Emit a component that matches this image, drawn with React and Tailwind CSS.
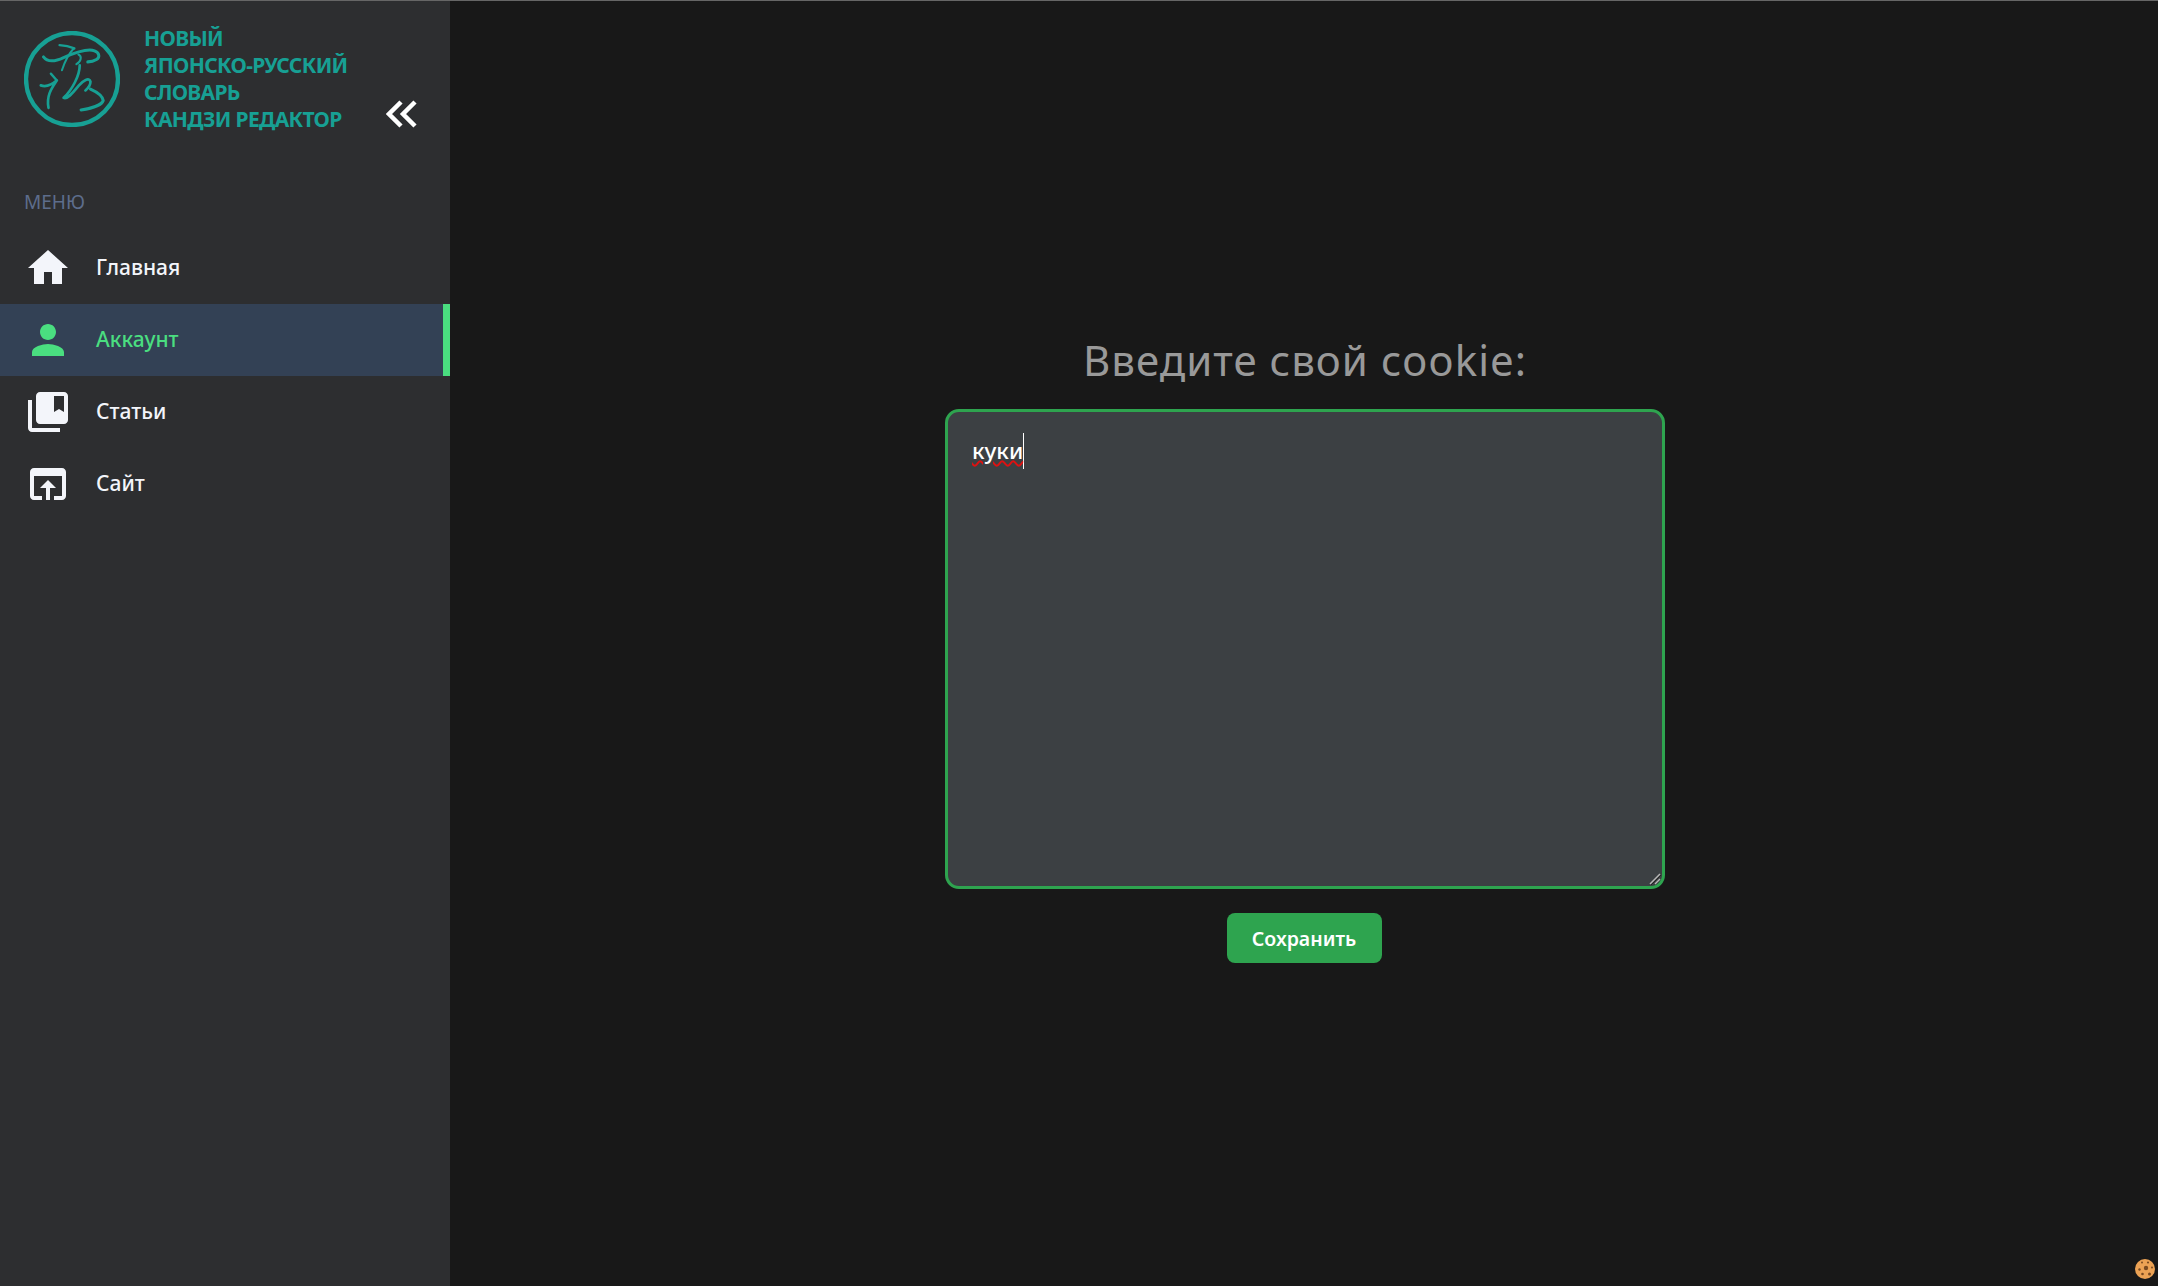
const FONT = "font-['Noto_Sans',sans-serif]";

const navItems = [
  {
    label: "Главная",
    d: "M10 20v-6h4v6h5v-8h3L12 3 2 12h3v8z",
  },
  {
    label: "Аккаунт",
    active: true,
    d: "M12 12c2.21 0 4-1.79 4-4s-1.79-4-4-4-4 1.79-4 4 1.79 4 4 4zm0 2c-2.67 0-8 1.34-8 4v2h16v-2c0-2.66-5.33-4-8-4z",
  },
  {
    label: "Статьи",
    d: "M4 6H2v14c0 1.1.9 2 2 2h14v-2H4V6zm16-4H8c-1.1 0-2 .9-2 2v12c0 1.1.9 2 2 2h12c1.1 0 2-.9 2-2V4c0-1.1-.9-2-2-2zm0 10l-2.5-1.5L15 12V4h5v8z",
  },
  {
    label: "Сайт",
    d: "M19 4H5c-1.11 0-2 .9-2 2v12c0 1.1.89 2 2 2h4v-2H5V8h14v10h-4v2h4c1.1 0 2-.9 2-2V6c0-1.1-.89-2-2-2zm-7 6l-4 4h3v6h2v-6h3l-4-4z",
  },
];

function Logo() {
  return (
    <svg viewBox="42 33 286 286" className="w-24 h-24 shrink-0 mt-[6px] text-[#17a094]" fill="none" stroke="currentColor" strokeLinecap="round" strokeLinejoin="round">
      <circle cx="185" cy="176" r="137" strokeWidth="13" />
      <path strokeWidth="7" d="M148 75C165 76 180 80 192 85" />
      <path strokeWidth="9" d="M100 110C112 126 135 124 160 112C190 99 232 84 252 92C268 98 268 112 258 118C250 123 242 125 232 125" />
      <path strokeWidth="6" d="M190 85C176 100 164 122 155 150" />
      <path strokeWidth="6" d="M204 103C216 108 212 124 198 132" />
      <path strokeWidth="7" d="M122 160L138 178" />
      <path strokeWidth="8" d="M92 195C106 200 124 194 140 180C124 204 108 226 115 262" />
      <path strokeWidth="8" d="M208 135C208 165 186 208 160 232C172 238 190 214 205 196C218 180 236 170 240 184C240 194 232 204 225 210" />
      <path strokeWidth="9" d="M212 268C240 264 274 254 278 240C276 226 258 214 240 206" />
    </svg>
  );
}

function Sidebar() {
  return (
    <aside className="w-[450px] shrink-0 bg-[#2d2e30] flex flex-col">
      <div className="flex pl-6 pt-6">
        <Logo />
        <div className="ml-6 w-[240px] text-[21px] leading-[27px] font-bold text-[#17a094] tracking-[-0.65px]">
          <div>НОВЫЙ</div>
          <div className="whitespace-nowrap">ЯПОНСКО-РУССКИЙ</div>
          <div>СЛОВАРЬ</div>
          <div className="whitespace-nowrap">КАНДЗИ РЕДАКТОР</div>
        </div>
        <svg viewBox="0 0 32 28" className="w-8 h-7 mt-[75px] translate-x-[2px] text-white" fill="none" stroke="currentColor" strokeWidth="4.5">
          <path d="M15 2L3 14l12 12" />
          <path d="M29 2L17 14l12 12" />
        </svg>
      </div>
      <div className="mt-[55px] pl-6 text-[19px] leading-7 text-[#5d6d8c]">МЕНЮ</div>
      <nav className="mt-4 flex flex-col">
        {navItems.map((item) => (
          <a
            key={item.label}
            className={
              item.active
                ? "h-[72px] flex items-center pl-6 bg-[#334155] border-r-[7px] border-[#4ade80] text-[#4ade80] text-[21px] font-medium"
                : "h-[72px] flex items-center pl-6 text-[#f3f5fa] text-[21px] font-medium"
            }
          >
            <svg viewBox="0 0 24 24" className="w-12 h-12" fill="currentColor">
              <path d={item.d} />
            </svg>
            <span className="ml-6">{item.label}</span>
          </a>
        ))}
      </nav>
    </aside>
  );
}

function CookieIcon() {
  return (
    <svg viewBox="0 0 20 20" className="fixed right-[3px] bottom-[7px] w-5 h-5">
      <circle cx="10" cy="10" r="10" fill="#eca254" />
      <circle cx="11" cy="9" r="2.2" fill="#7a4a20" />
      <circle cx="4.5" cy="10.5" r="1.2" fill="#7a4a20" />
      <circle cx="7" cy="3.5" r="1" fill="#7a4a20" />
      <circle cx="13" cy="3.5" r="1.1" fill="#7a4a20" />
      <circle cx="17" cy="8.5" r="1" fill="#7a4a20" />
      <circle cx="7.5" cy="15" r="1.3" fill="#7a4a20" />
      <circle cx="14.5" cy="15" r="1.5" fill="#7a4a20" />
    </svg>
  );
}

export default function App() {
  return (
    <div className={`h-screen flex border-t border-[#666] bg-[#181818] overflow-hidden ${FONT}`}>
      <Sidebar />
      <main className="flex-1 flex flex-col items-center justify-center pb-px">
        <h1 className="ml-[2px] text-[42px] leading-[74px] tracking-[1px] text-[#999]">Введите свой cookie:</h1>
        <div className="relative ml-[2px] mt-[12px] w-[720px] h-[480px]">
          <textarea
            defaultValue="куки"
            spellCheck={false}
            className="block w-full h-full resize-none bg-[#3c4043] border-[3px] border-[#2ea44f] rounded-[14px] pl-[24px] pr-[25px] pt-[21px] text-[22.5px] leading-[36px] font-medium text-white outline-none"
          />
          <span className="absolute left-[27px] top-[24px] text-[22.5px] leading-[36px] font-medium text-transparent underline decoration-wavy decoration-[#e01010] decoration-2 border-r border-white pointer-events-none">
            куки
          </span>
          <svg viewBox="0 0 12 12" className="absolute right-[4px] bottom-[4px] w-3 h-3" fill="none" strokeWidth="1.5">
            <path d="M1 11L11 1" stroke="#b8b8b8" />
            <path d="M6 11L11 6" stroke="#b8b8b8" />
            <path d="M2 12L12 2" stroke="#222" strokeWidth="1" />
          </svg>
        </div>
        <button className="mt-[24px] w-[155px] h-[50px] pt-[2px] rounded-lg bg-[#2ea44f] text-white text-[19.5px] font-semibold">
          Сохранить
        </button>
      </main>
      <CookieIcon />
    </div>
  );
}
